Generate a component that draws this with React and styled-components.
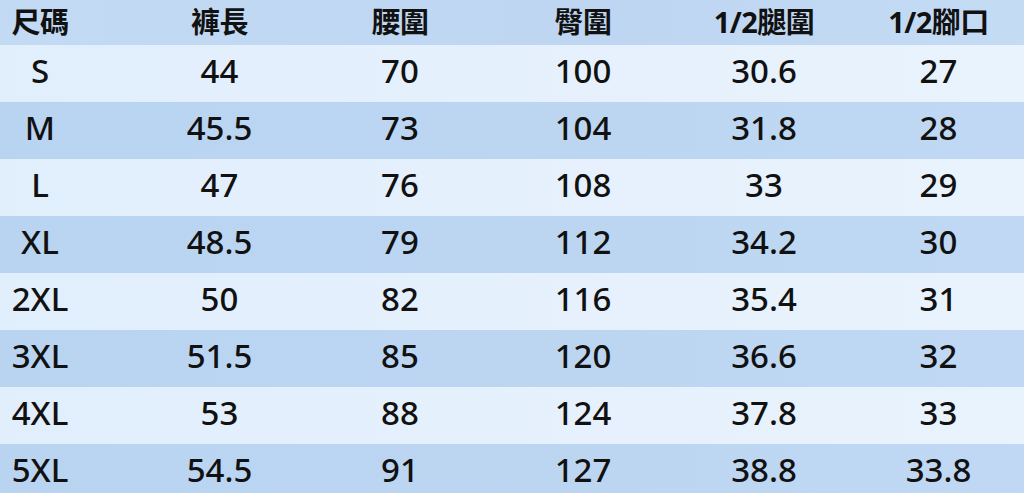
import React from 'react';
import styled, { createGlobalStyle } from 'styled-components';

const GlobalStyle = createGlobalStyle`
  html, body {
    margin: 0;
    padding: 0;
    background: #e5f0fc;
    overflow: hidden;
  }
`;

const Table = styled.div`
  width: 1024px;
  height: 493px;
  overflow: hidden;
  font-family: "Noto Sans", "Noto Sans CJK TC", sans-serif;
  color: #111;
`;

const Row = styled.div`
  display: grid;
  grid-template-columns: 130px 179px 182px 184px 178px 171px;
  align-items: center;
  height: ${({ $head }) => ($head ? '45px' : '57px')};
  padding-bottom: ${({ $head }) => ($head ? '2px' : '6px')};
  box-sizing: border-box;
  background: ${({ $head, $dark }) =>
    $head
      ? 'linear-gradient(90deg, #c3daf4, #bed6f2 60%, #c4dbf4)'
      : $dark
      ? 'linear-gradient(90deg, #b9d4f1, #bcd6f2 60%, #c0d8f3)'
      : 'linear-gradient(90deg, #e1eefc, #e6f1fd 60%, #e9f3fd)'};
`;

const Cell = styled.div`
  text-align: center;
  font-size: ${({ $head }) => ($head ? '29px' : '33px')};
  font-weight: ${({ $head }) => ($head ? 700 : 500)};
  line-height: 1;
  white-space: nowrap;
  padding-right: ${({ $first }) => ($first ? '50px' : '0')};
  letter-spacing: ${({ $head }) => ($head ? '-0.5px' : '0')};
`;

const headers = ['尺碼', '褲長', '腰圍', '臀圍', '1/2腿圍', '1/2腳口'];

const rows = [
  ['S', '44', '70', '100', '30.6', '27'],
  ['M', '45.5', '73', '104', '31.8', '28'],
  ['L', '47', '76', '108', '33', '29'],
  ['XL', '48.5', '79', '112', '34.2', '30'],
  ['2XL', '50', '82', '116', '35.4', '31'],
  ['3XL', '51.5', '85', '120', '36.6', '32'],
  ['4XL', '53', '88', '124', '37.8', '33'],
  ['5XL', '54.5', '91', '127', '38.8', '33.8'],
];

export default function App() {
  return (
    <>
      <GlobalStyle />
      <Table>
        <Row $head>
          {headers.map((h, i) => (
            <Cell key={h} $head $first={i === 0}>
              {h}
            </Cell>
          ))}
        </Row>
        {rows.map((r, ri) => (
          <Row key={r[0]} $dark={ri % 2 === 1}>
            {r.map((v, i) => (
              <Cell key={i} $first={i === 0}>
                {v}
              </Cell>
            ))}
          </Row>
        ))}
      </Table>
    </>
  );
}
